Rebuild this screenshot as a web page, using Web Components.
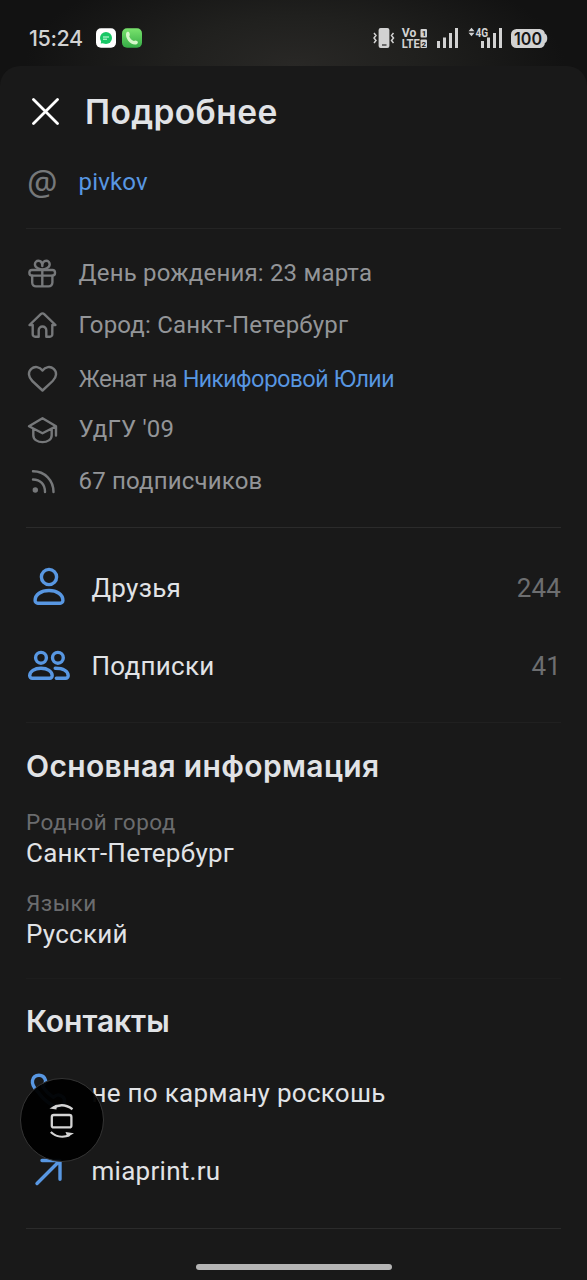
<!DOCTYPE html>
<html lang="ru">
<head>
<meta charset="utf-8">
<title>Подробнее</title>
<style>
html,body{margin:0;padding:0;background:#111}
body{width:587px;height:1280px;overflow:hidden;font-family:Roboto,"Noto Sans",sans-serif}
</style>
</head>
<body>
<profile-screen></profile-screen>
<script>
const define = (name, html) => customElements.define(name, class extends HTMLElement {
  constructor() {
    super();
    const t = document.createElement('template');
    t.innerHTML = html;
    this.attachShadow({mode: 'open'}).append(t.content.cloneNode(true));
  }
});

const ICONS = {
  gift: '<rect x="1.400" y="11" width="25.600" height="5.600" rx="2.600"/><path d="M14.300 11v16.400M4.200 16.800v6.800a3.800 3.800 0 0 0 3.800 3.800h12.600a3.800 3.800 0 0 0 3.800-3.800v-6.800M14.300 10.500C12.300 10.500 6.900 9 6.900 5.200c0-2 1.600-3.400 3.500-3.400 2.600 0 3.900 2.400 3.900 5.200 0-2.800 1.300-5.200 3.900-5.200 1.900 0 3.500 1.400 3.500 3.400 0 3.800-5.400 5.300-7.400 5.300z"/>',
  home: '<path d="M2 15.500 13.300 4.600a2.400 2.400 0 0 1 3.400 0L28 15.500H24.800v9.300a2.400 2.400 0 0 1-2.400 2.400h-3.600v-6.400a3.800 3.800 0 0 0-7.600 0v6.400H7.600a2.400 2.400 0 0 1-2.400-2.400v-9.300z" transform="translate(-.5 -1.500)"/>',
  heart: '<path d="M14.500 26.500 4.300 17C.3 13.200-.2 8 3.300 4.900c3.300-3 8.300-2.300 11.200 1.600 2.900-3.900 7.900-4.600 11.200-1.600 3.500 3.100 3 8.300-1 12.100z" transform="translate(0 -1)"/>',
  cap: '<path d="M14.500 3.200 28 11.200 14.500 18.300 1 11.200zM5.300 14v6.200c0 9.200 18.400 9.200 18.400 0V14M28 11.500v9"/>',
  rss: '<path d="M5.500 4.800C17.500 4.800 26 14 26 25.500M5.500 13c7.500 0 12 5 12 12.500" transform="translate(-.5 -.5)"/><circle cx="7.300" cy="23" r="2.700" fill="currentColor" stroke="none"/>',
  user: '<circle cx="21" cy="10" r="7.600"/><path d="M9.800 36.200h22.400a2.700 2.700 0 0 0 2.700-2.700c0-6-6-10-13.900-10s-13.900 4-13.900 10a2.700 2.700 0 0 0 2.700 2.700z"/>',
  users: '<g transform="translate(-.3 -1.200)"><circle cx="13.300" cy="14" r="5.400"/><circle cx="30.200" cy="14" r="5.400"/><path d="M4.500 34.400H22a2.500 2.500 0 0 0 2.500-2.500c0-4.500-4.700-7.400-11.200-7.400S2 27.400 2 31.900a2.500 2.500 0 0 0 2.500 2.500zM27.500 24.500c8.500 0 13 3 13 7.400a2.500 2.500 0 0 1-2.500 2.500H28.600"/></g>',
  phone: '<path d="M10 20C6 16 3.800 12 4.500 8.500 5.200 5 8 3.200 11 3.200c3.200 0 5.600 2 6.500 5 .8 3-1.500 4.500-3 6 3 5 6 8 11 11 4-3.500 6-2.500 9-.5 3 2 2.500 6.500 0 8.500-6 5-18-4-24.500-13.200z"/>',
  arrow: '<path d="M9 33.500 32 10.500M14 10.500h18v18.700"/>'
};
customElements.define('ui-icon', class extends HTMLElement {
  connectedCallback() {
    const s = +this.getAttribute('size') || 30;
    const r = this.attachShadow({mode: 'open'});
    r.innerHTML = `<style>:host{display:block;flex:none;width:${s}px;height:${s}px}svg{display:block;overflow:visible}</style>
    <svg width="${s}" height="${s}" fill="none" stroke="currentColor" stroke-width="${s > 35 ? 3.4 : 2.4}" stroke-linejoin="round" stroke-linecap="round">${ICONS[this.getAttribute('name')]}</svg>`;
  }
});

define('status-bar', `<style>
:host{display:flex;height:66px;box-sizing:border-box;padding:10px 39px 0 29px;align-items:center;color:#d2d2d2;
background:radial-gradient(ellipse 270px 110px at 295px 66px,#292826 0%,#20201e 45%,#121212 100%)}
.time{font:500 21.500px/26px Inter,sans-serif;letter-spacing:-.4px;width:67px;margin-top:-1px}
svg{display:block}
.right{margin-left:auto}
text{font-family:Roboto,sans-serif;font-weight:700;fill:#d2d2d2}
</style>
<span class="time">15:24</span>
<svg width="46" height="20"><defs><linearGradient id="g" x2="0" y2="1"><stop stop-color="#7ae36d"/><stop offset="1" stop-color="#35ac46"/></linearGradient></defs>
<rect width="20" height="19.500" y=".2" rx="5" fill="#fff"/><circle cx="10" cy="10" r="6" fill="#18c766"/><path d="m4.700 15.500 1-4 3.500 3.500z" fill="#18c766"/><path d="M7 9h6M7 11.200h4" stroke="#d8ffe7" stroke-width="1"/>
<rect x="26" width="20" height="19.500" y=".2" rx="5" fill="url(#g)"/><path d="M30.200 5c.8-1.800 2.700-1.800 3.300 0 .6 1.800.3 2.500-.3 3.300.8 2.200 2.500 4 4.700 4.800 1-.9 2-.7 3.200 0 1.200.7 1 2.700-.4 3.200-5.500 1.800-12-5.800-10.500-11.300z" fill="#d5f7c9"/></svg>
<svg class="right" width="176" height="24" viewBox="372 26 176 24">
<g fill="#d2d2d2"><rect x="378.600" y="28" width="10.800" height="20" rx="2"/><path d="M382 45h4.500" stroke="#222" stroke-width="1.200"/><path d="m374 33 2 2.500-2 2.500 2 2.500-2 2.500M393.500 33l-2 2.500 2 2.500-2 2.500 2 2.500" fill="none" stroke="#d2d2d2" stroke-width="1.500"/>
<text x="401.800" y="37" style="font-size:12px" textLength="14.500" lengthAdjust="spacingAndGlyphs">Vo</text><text x="401.800" y="48" style="font-size:12px" textLength="18" lengthAdjust="spacingAndGlyphs">LTE</text>
<rect x="420.500" y="29" width="6.500" height="8.500" rx="1"/><rect x="420.500" y="39.500" width="6.500" height="8.500" rx="1"/>
<path d="M437 41h3v7h-3zM443 37.500h3V48h-3zM449 33h3v15h-3zM455 28h3v20h-3zM481 41h3v7h-3zM487 37.500h3V48h-3zM493 33h3v15h-3zM499 28h3v20h-3zM468.500 31.200l3-3.400 3 3.400zM468.500 32.800l3 3.400 3-3.400z"/>
<text x="475.500" y="36.500" style="font-size:12px" textLength="12.700" lengthAdjust="spacingAndGlyphs">4G</text>
<rect x="511" y="29" width="34" height="19" rx="5.500"/><path d="M545 33.500c3 1 3 8.500 0 9.500z"/></g>
<text x="421.800" y="36.200" style="font-size:8px;fill:#161616">1</text><text x="421.500" y="46.700" style="font-size:8px;fill:#161616">2</text>
<text x="514" y="44.800" textLength="28" lengthAdjust="spacingAndGlyphs" style="font-size:17.500px;fill:#161616;font-family:Inter;font-weight:600">100</text>
</svg>`);

define('sheet-header', `<style>
:host{display:flex;height:92px;align-items:center;padding-left:6px}
svg{width:27px;height:27px;margin:-2px 26px 0 0;display:block}
h1{margin:-1px 0 0;font:600 33.500px/40px Inter,sans-serif;letter-spacing:.4px;color:#e1e3e6}
</style><svg viewBox="0 0 27 27"><path d="M1.500 1.500l24 24m0-24-24 24" fill="none" stroke="#fff" stroke-width="2.800" stroke-linecap="round"/></svg><h1><slot></slot></h1>`);

define('info-row', `<style>
:host{display:flex;height:52px;align-items:center;gap:22.500px;padding-left:2px;color:#76787a;font-size:24px;line-height:30px}
.t{color:#939598;white-space:pre;letter-spacing:var(--ls,.18px);margin-top:-2px}
::slotted(a){color:#5897e2}
.i{width:28px;display:flex}
</style><div class="i"><slot name="icon"></slot></div><div class="t"><slot></slot></div>`);

define('nav-row', `<style>
:host{display:flex;height:78px;align-items:center;padding-left:2px;color:#5897e2;font-size:26px;line-height:32px}
.t{color:#e1e3e6;margin-left:21.500px;flex:1;white-space:pre;letter-spacing:var(--ls,.28px);margin-top:-1px}
.n{color:#6d6e70;letter-spacing:.1px}
</style><slot name="icon"></slot><div class="t"><slot></slot></div><div class="n"><slot name="count"></slot></div>`);

define('line-rule', `<style>:host{display:block;height:1px;background:var(--c,#2b2b2b)}</style>`);

define('section-title', `<style>:host{display:block}
h2{margin:0;font:600 30px/42px Inter,sans-serif;color:#e1e3e6;letter-spacing:var(--ls,.36px);white-space:pre}</style><h2><slot></slot></h2>`);

define('fact-item', `<style>
:host{display:block;height:80.500px}
.l{font-size:22.500px;line-height:28px;color:#6b6c6e;letter-spacing:.45px}
.v{font-size:26px;line-height:34px;color:#e1e3e6;letter-spacing:var(--ls,.26px)}
</style><div class="l"><slot name="label"></slot></div><div class="v"><slot></slot></div>`);

define('rotate-button', `<style>
:host{display:block;width:82px;height:82px;border-radius:50%;background:rgba(0,0,0,.96);border:1px solid #343434}
svg{display:block}
</style><svg width="82" height="82" fill="none" stroke="#d4d4d4" stroke-width="2.300"><rect x="30.800" y="36" width="19.600" height="12.400" rx="2"/><path d="M32 29c6-3.800 13-3.500 19.500 1.200M29.800 53c5.500 5.200 13 5.700 19 3"/><path d="M28.500 29.500 35.500 25.500v5zM53 54.200 44.500 53l2 5z" fill="#d4d4d4" stroke="none"/></svg>`);

define('profile-screen', `<style>
:host{display:block;position:relative;width:587px;height:1280px;overflow:hidden;background:#121212}
main{height:1214px;box-sizing:border-box;background:#191919;border-radius:20px 20px 0 0;padding:0 26px;overflow:hidden}
.at{height:49px}
.info{padding:19px 0 19px}
.wed{box-sizing:border-box;padding-top:3px;font-family:Inter,sans-serif;font-size:22.500px;--ls:-.55px}
.nav{padding:21px 0 17px}
.basic{padding:22px 0 0;height:255px;box-sizing:border-box}
.facts{padding-top:21px}
.contacts{padding:21px 0 18px}
.contacts section-title{margin-bottom:12px;--ls:-.05px}
.atsign{font:400 34px/30px "Noto Sans",sans-serif;display:block;width:28px;margin:-1px 0 0 -1px}
rotate-button{position:absolute;left:20px;top:1078px}
.bar{position:absolute;left:196px;top:1264px;width:196px;height:6px;border-radius:3px;background:#b5b5b5}
</style>
<status-bar></status-bar>
<main>
<sheet-header>Подробнее</sheet-header>
<info-row class="at"><span slot="icon" class="atsign">@</span><a>pivkov</a></info-row>
<div style="height:21px"></div>
<line-rule style="--c:#242424"></line-rule>
<div class="info">
<info-row><ui-icon slot="icon" name="gift"></ui-icon>День рождения: 23 марта</info-row>
<info-row><ui-icon slot="icon" name="home"></ui-icon>Город: Санкт-Петербург</info-row>
<info-row class="wed"><ui-icon slot="icon" name="heart"></ui-icon>Женат на <a>Никифоровой Юлии</a></info-row>
<info-row><ui-icon slot="icon" name="cap"></ui-icon>УдГУ '09</info-row>
<info-row><ui-icon slot="icon" name="rss"></ui-icon>67 подписчиков</info-row>
</div>
<line-rule></line-rule>
<div class="nav">
<nav-row><ui-icon slot="icon" name="user" size="42"></ui-icon>Друзья<span slot="count">244</span></nav-row>
<nav-row><ui-icon slot="icon" name="users" size="42"></ui-icon>Подписки<span slot="count">41</span></nav-row>
</div>
<line-rule style="--c:#202020"></line-rule>
<div class="basic">
<section-title>Основная информация</section-title>
<div class="facts">
<fact-item><span slot="label">Родной город</span>Санкт-Петербург</fact-item>
<fact-item><span slot="label">Языки</span>Русский</fact-item>
</div>
</div>
<line-rule style="--c:#1d1d1d"></line-rule>
<div class="contacts">
<section-title>Контакты</section-title>
<nav-row><ui-icon slot="icon" name="phone" size="42"></ui-icon>не по карману роскошь</nav-row>
<nav-row><ui-icon slot="icon" name="arrow" size="42"></ui-icon>miaprint.ru</nav-row>
</div>
<line-rule></line-rule>
</main>
<rotate-button></rotate-button>
<div class="bar"></div>`);
</script>
</body>
</html>
